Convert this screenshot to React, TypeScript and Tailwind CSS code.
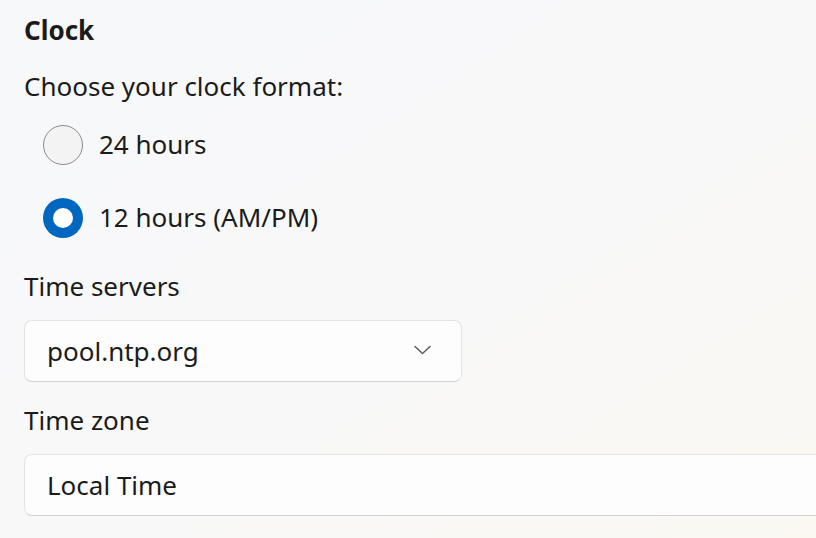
import React, { useState } from 'react';

const font = { fontFamily: '"Noto Sans", "Open Sans", sans-serif' };

interface RadioProps {
    label: string;
    checked: boolean;
    onSelect: () => void;
}

// 单选按钮（Windows 11 风格）
const Radio = ({ label, checked, onSelect }: RadioProps) => (
    <button className="flex items-center h-[73px] pl-[19px] text-left" onClick={onSelect}>
        {checked ? (
            <span className="w-[40px] h-[40px] rounded-full bg-[#0067c0] flex items-center justify-center">
                <span className="w-[20px] h-[20px] rounded-full bg-white" />
            </span>
        ) : (
            <span className="w-[40px] h-[40px] rounded-full border-[1.5px] border-[#8b8b8b] bg-[#f3f3f3]" />
        )}
        <span className="ml-[16px] text-[26px] text-[#1b1b1b]">{label}</span>
    </button>
);

const ChevronDown = () => (
    <svg width="17" height="10" viewBox="0 0 17 10" fill="none">
        <path d="M1 1.5L8.5 8.5L16 1.5" stroke="#5f5f5f" strokeWidth="1.6" strokeLinecap="round" strokeLinejoin="round" />
    </svg>
);

const App = () => {
    const [format, setFormat] = useState('12');

    return (
        <div
            className="w-[816px] h-[538px] overflow-hidden bg-gradient-to-br from-[#f7f8fa] via-[#f8f8f9] to-[#fbf8f2] text-[#1b1b1b]"
            style={font}
        >
            <div className="pl-[24px] pt-[12px]">
                <div className="text-[26px] font-bold leading-[36px]">Clock</div>
                <div className="mt-[20px] text-[26px] leading-[36px]">Choose your clock format:</div>
                <div className="flex flex-col mt-[4px]">
                    <Radio label="24 hours" checked={format === '24'} onSelect={() => setFormat('24')} />
                    <Radio label="12 hours (AM/PM)" checked={format === '12'} onSelect={() => setFormat('12')} />
                </div>

                {/* 时间服务器 */}
                <div className="mt-[14px] text-[26px] leading-[36px]">Time servers</div>
                <div className="mt-[16px] w-[438px] h-[62px] rounded-[8px] border border-[#e3e3e3] border-b-[#d3d3d3] bg-[#fdfdfd] flex items-center justify-between pl-[22px] pr-[30px]">
                    <span className="text-[26px]">pool.ntp.org</span>
                    <span className="-mt-[2px]"><ChevronDown /></span>
                </div>

                {/* 时区 */}
                <div className="mt-[20px] text-[26px] leading-[36px]">Time zone</div>
                <div className="mt-[16px] w-[820px] h-[62px] rounded-[8px] border border-[#e3e3e3] border-b-[#d3d3d3] bg-[#fdfdfd] flex items-center pl-[22px]">
                    <span className="text-[26px]">Local Time</span>
                </div>
            </div>
        </div>
    );
};

export default App;
